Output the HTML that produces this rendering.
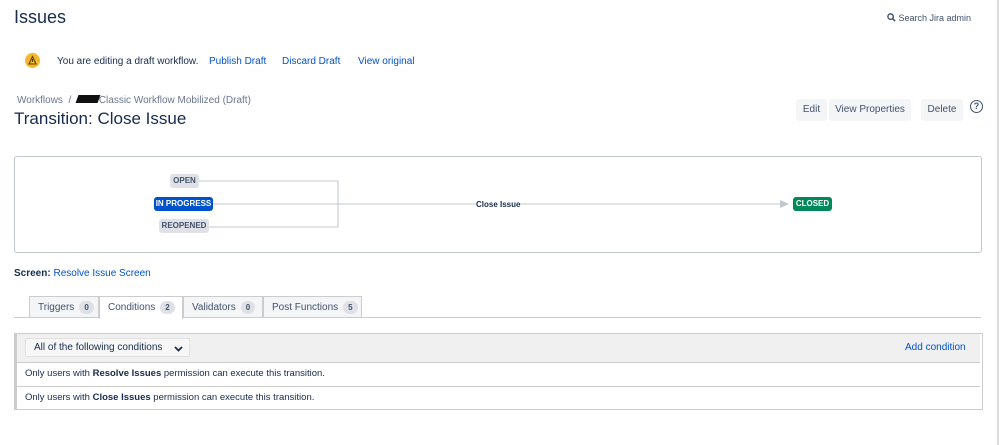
<!DOCTYPE html>
<html><head><style>
body{margin:0;width:999px;height:445px;background:#fff;font-family:"Liberation Sans",sans-serif;color:#172b4d;position:relative;overflow:hidden}
.a{position:absolute;white-space:nowrap}
a,.l{color:#0052cc;text-decoration:none}
.lz{font-size:8px;font-weight:bold;border-radius:3px;height:14px;line-height:14px;position:absolute;background:#dfe1e6;color:#42526e;text-align:center;white-space:nowrap}
.btn{position:absolute;top:99px;height:22px;line-height:22px;background:#f4f5f7;border-radius:3px;font-size:11px;color:#42526e;text-align:center}
.tab{position:absolute;top:296px;height:21px;line-height:21px;font-size:10px;color:#42526e;background:#f4f5f7;border:1px solid #ccc;border-bottom:none;box-sizing:border-box;padding-left:8px;white-space:nowrap}
.b{display:inline-block;background:#dfe1e6;border-radius:8px;padding:0 5px;font-size:8px;line-height:13px;margin-left:5px;font-weight:bold}
</style></head><body>
<div class="a" style="left:14px;top:7px;font-size:18px;">Issues</div>
<div class="a" style="left:887px;top:13px;font-size:9px;color:#42526e"><svg width="9" height="9" viewBox="0 0 10 10" style="vertical-align:-1px"><circle cx="4" cy="4" r="3" fill="none" stroke="#42526e" stroke-width="1.6"/><path d="M6 6L9 9" stroke="#42526e" stroke-width="1.8"/></svg> Search Jira admin</div>
<div class="a" style="left:25px;top:53px;width:15px;height:15px;border-radius:50%;background:#f5b72f"><svg width="15" height="15" viewBox="0 0 15 15"><path d="M7.5 3.5L11 11H4Z" fill="none" stroke="#5a4300" stroke-width="1.1"/><path d="M7.5 6v3" stroke="#5a4300"/></svg></div>
<div class="a" style="left:57px;top:56px;font-size:10px;">You are editing a draft workflow.</div>
<div class="a l" style="left:209px;top:56px;font-size:10px;">Publish Draft</div>
<div class="a l" style="left:282px;top:56px;font-size:10px;">Discard Draft</div>
<div class="a l" style="left:358px;top:56px;font-size:10px;">View original</div>
<div class="a" style="left:17px;top:95px;font-size:10px;color:#6b778c">Workflows &nbsp;/ &nbsp;<span style="display:inline-block;width:22px;height:8px;background:#111;vertical-align:0;transform:skewX(-20deg)"></span>Classic Workflow Mobilized (Draft)</div>
<div class="a" style="left:14px;top:109px;font-size:17px;">Transition: Close Issue</div>
<div class="btn" style="left:796px;width:31px;font-size:10px">Edit</div>
<div class="btn" style="left:829px;width:82px;font-size:10px">View Properties</div>
<div class="btn" style="left:921px;width:42px;font-size:10px">Delete</div>
<div class="a" style="left:970px;top:100px;width:11px;height:11px;border:1.3px solid #42526e;border-radius:50%;font-size:9px;line-height:11px;text-align:center;font-weight:bold;color:#42526e">?</div>
<div class="a" style="left:14px;top:156px;width:966px;height:95px;border:1px solid #c1c7d0;border-radius:3px"></div>
<svg class="a" style="left:0;top:0" width="999" height="260">
<path d="M199 181H338V227H209M213 204H476M520 204H780" fill="none" stroke="#c1c7d0" stroke-width="1"/>
<path d="M780 200L789 204L780 208Z" fill="#c1c7d0"/>
</svg>
<div class="lz" style="left:170px;top:174px;width:29px">OPEN</div>
<div class="lz" style="left:154px;top:197px;width:59px;background:#0052cc;color:#fff">IN PROGRESS</div>
<div class="lz" style="left:159px;top:219px;width:50px">REOPENED</div>
<div class="a" style="left:476px;top:200px;font-size:8px;font-weight:bold">Close Issue</div>
<div class="lz" style="left:793px;top:197px;width:39px;background:#00875a;color:#fff">CLOSED</div>
<div class="a" style="left:14px;top:268px;font-size:10px;"><b>Screen:</b> <span class="l">Resolve Issue Screen</span></div>
<div class="a" style="left:14px;top:317px;width:967px;height:1px;background:#ccc"></div>
<div class="tab" style="left:29px;width:70px">Triggers<span class="b">0</span></div>
<div class="tab" style="left:99px;width:84px;background:#fff;height:23px">Conditions<span class="b">2</span></div>
<div class="tab" style="left:183px;width:80px">Validators<span class="b">0</span></div>
<div class="tab" style="left:263px;width:99px">Post Functions<span class="b">5</span></div>
<div class="a" style="left:14px;top:333px;width:965px;height:75px;border:1px solid #ccc;border-left:3px solid #ccc"></div>
<div class="a" style="left:17px;top:334px;width:963px;height:28px;background:#f0f0f0;border-bottom:1px solid #ccc"></div>
<div class="a" style="left:25px;top:338px;width:165px;height:19px;background:#f7f7f7;border:1px solid #e2e2e2;box-sizing:border-box;font-size:10px;line-height:18px;padding-left:8px">All of the following conditions<svg width="9" height="6" style="position:absolute;right:6px;top:7px"><path d="M1 1L4.5 4.5L8 1" fill="none" stroke="#172b4d" stroke-width="1.8"/></svg></div>
<div class="a l" style="left:905px;top:342px;font-size:10px">Add condition</div>
<div class="a" style="left:25px;top:368px;font-size:9.5px">Only users with <b>Resolve Issues</b> permission can execute this transition.</div>
<div class="a" style="left:17px;top:386px;width:963px;height:1px;background:#ccc"></div>
<div class="a" style="left:25px;top:392px;font-size:9.5px">Only users with <b>Close Issues</b> permission can execute this transition.</div>
<div class="a" style="left:997px;top:0;width:2px;height:445px;background:#ddd"></div>
</body></html>
